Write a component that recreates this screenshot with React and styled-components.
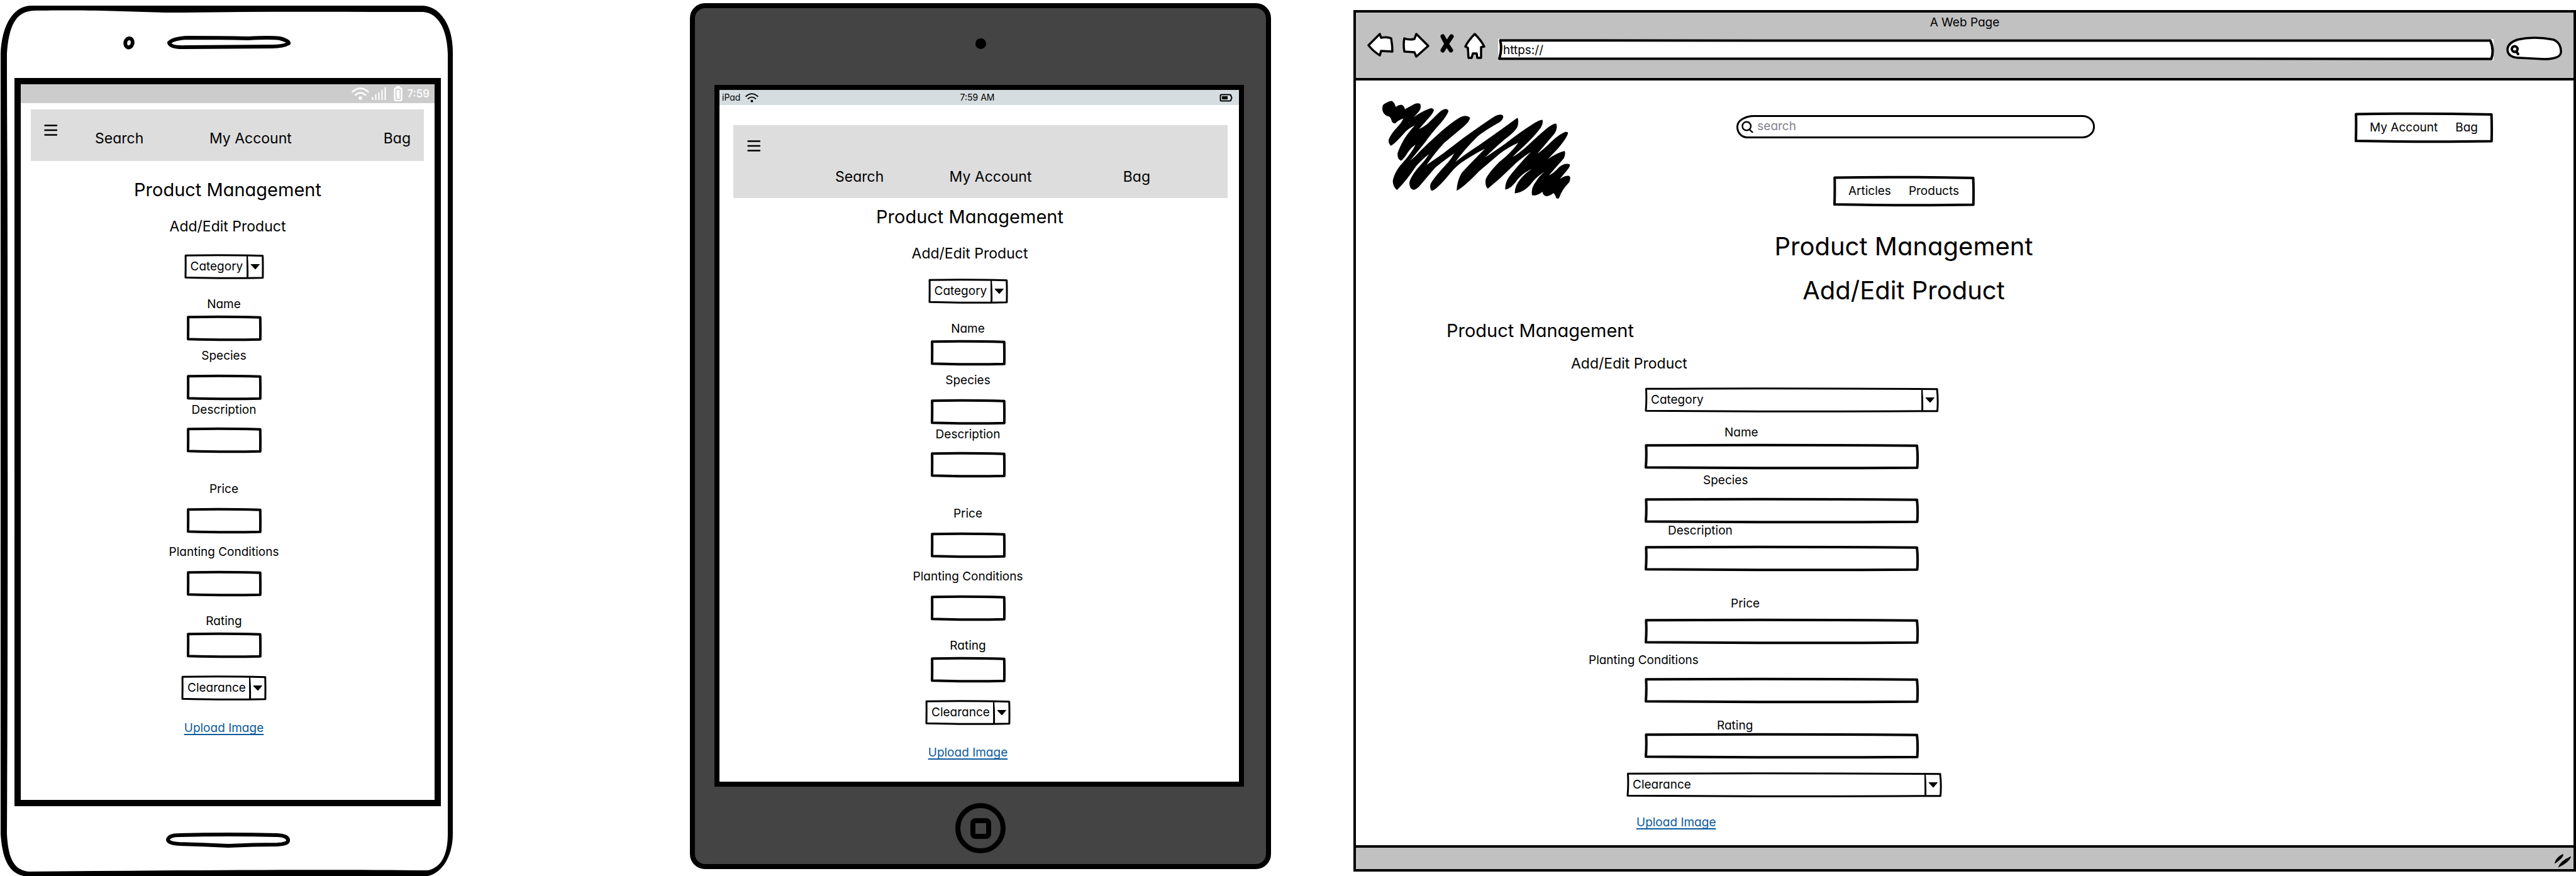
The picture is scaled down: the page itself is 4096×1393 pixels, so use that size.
import React from "react";
import styled, { createGlobalStyle, css } from "styled-components";

const ink = "#000";
const chrome = "#c1c1c1";

const GlobalStyle = createGlobalStyle`
  * { box-sizing: border-box; }
  body {
    margin: 0;
    background: #fff;
    color: ${ink};
    font-family: Inter, "Open Sans", sans-serif;
    font-feature-settings: "cv11";
    font-variation-settings: "opsz" 28;
  }
  h1, h2, h3 { margin: 0; font-weight: 400; white-space: nowrap; }
  a { color: inherit; text-decoration: none; }
  svg { display: block; }
`;

/* ---------- page ---------- */

const Board = styled.main`
  display: grid;
  grid-template-columns: 721fr 376fr 924fr 131fr 1944fr;
  align-items: start;
`;

const Cell = styled.div`
  grid-column: ${(p) => p.$col};
  padding-top: ${(p) => p.$top}px;
  min-width: 0;
`;

/* ---------- hand drawn parts ---------- */

const Outline = styled.svg`
  position: absolute;
  top: 2px;
  left: 2px;
  width: calc(100% - 4px);
  height: calc(100% - 4px);
  overflow: visible;
  pointer-events: none;
  fill: none;
  stroke: ${ink};
  stroke-linejoin: round;
  path { vector-effect: non-scaling-stroke; }
`;

function Sketch({ weight = 4 }) {
  return (
    <Outline viewBox="0 0 100 100" preserveAspectRatio="none" strokeWidth={weight} aria-hidden="true">
      <path d="M0.1 1 Q45 -3 99.8 2 Q100.2 50 99.9 99 Q55 103 0 98 Q0.3 50 0.1 1 Z" />
    </Outline>
  );
}

/* ---------- shared type ---------- */

const titleType = css`font-size: 29px; line-height: 32px;`;
const navType = css`font-size: 23px; line-height: 28px;`;
const bodyType = css`font-size: 19px; line-height: 20px;`;

const Display = styled.h1`
  font-size: 40px;
  line-height: 48px;
`;
const Title = styled.h2`${titleType}`;
const Subtitle = styled.h3`${navType}`;

/* ---------- form ---------- */

const Form = styled.form`
  display: flex;
  flex-direction: column;
  align-items: ${(p) => (p.$wide ? "flex-start" : "center")};
  padding-top: ${(p) => p.$top}px;
  padding-left: ${(p) => (p.$wide ? 370 : 0)}px;
  padding-right: ${(p) => p.$right || 0}px;
`;

const Label = styled.label`
  ${bodyType}
  white-space: nowrap;
  margin-top: ${(p) => p.$above}px;
  margin-left: ${(p) => p.$indent || 0}px;
`;

const InputBox = styled.div`
  position: relative;
  width: ${(p) => p.$width}px;
  height: 40px;
  margin-top: ${(p) => p.$gap}px;
  margin-left: ${(p) => p.$indent || 0}px;
`;

const TextInput = styled.input`
  width: 100%;
  height: 100%;
  padding: 0 8px;
  border: 0;
  outline: 0;
  background: transparent;
  font: inherit;
  font-size: 19px;
`;

const SelectBox = styled.div`
  position: relative;
  width: ${(p) => p.$width}px;
  height: 40px;
  margin-top: ${(p) => p.$gap}px;
  margin-left: ${(p) => p.$indent || 0}px;
`;

const Select = styled.select`
  width: 100%;
  height: 100%;
  padding: 0 28px 2px 10px;
  border: 0;
  outline: 0;
  appearance: none;
  background: transparent;
  color: ${ink};
  font: inherit;
  font-size: 19px;
`;

const Arrow = styled.svg`
  position: absolute;
  top: 0;
  right: 0;
  pointer-events: none;
`;

const UploadLink = styled.a`
  ${bodyType}
  margin-top: ${(p) => p.$above}px;
  margin-left: ${(p) => p.$indent || 0}px;
  color: #0b5a9d;
  text-decoration: underline;
  text-decoration-thickness: 2px;
  text-decoration-skip-ink: none;
  text-underline-offset: 3px;
`;

function DropDown({ name, width, gap, indent }) {
  return (
    <SelectBox $width={width} $gap={gap} $indent={indent}>
      <Select aria-label={name} defaultValue={name}>
        <option>{name}</option>
      </Select>
      <Arrow width="28" height="40" viewBox="0 0 28 40" aria-hidden="true">
        <path d="M0.5 2 Q2 20 1.5 38" fill="none" stroke="#000" strokeWidth="3" />
        <path d="M7 16.5 H20.5 L14 24 Z" fill="#000" stroke="#000" />
      </Arrow>
      <Sketch weight={3} />
    </SelectBox>
  );
}

const compact = {
  category: { width: 127 },
  fieldWidth: 119,
  fields: [
    { name: "Name", above: 30, gap: 8 },
    { name: "Species", above: 14, gap: 20 },
    { name: "Description", above: 6, gap: 18 },
    { name: "Price", above: 48, gap: 20 },
    { name: "Planting Conditions", above: 20, gap: 20 },
    { name: "Rating", above: 30, gap: 8 },
  ],
  clearance: { width: 136, gap: 28 },
  upload: { above: 34 },
};

const wide = {
  category: { width: 468, indent: 89 },
  fieldWidth: 436,
  fieldIndent: 89,
  fields: [
    { name: "Name", above: 22, gap: 8, indent: 216 },
    { name: "Species", above: 8, gap: 18, indent: 182 },
    { name: "Description", above: 2, gap: 14, indent: 126 },
    { name: "Price", above: 42, gap: 14, indent: 226 },
    { name: "Planting Conditions", above: 16, gap: 18, indent: 0 },
    { name: "Rating", above: 26, gap: 2, indent: 204 },
  ],
  clearance: { width: 502, gap: 22, indent: 60 },
  upload: { above: 30, indent: 76 },
};

function ProductForm({ id, plan, top, right }) {
  return (
    <Form $wide={plan === wide} $top={top} $right={right}>
      <DropDown name="Category" gap={0} {...plan.category} />
      {plan.fields.map((f) => {
        const fieldId = `${id}-${f.name.toLowerCase().replace(" ", "-")}`;
        return (
          <React.Fragment key={f.name}>
            <Label htmlFor={fieldId} $above={f.above} $indent={f.indent}>{f.name}</Label>
            <InputBox $width={plan.fieldWidth} $gap={f.gap} $indent={plan.fieldIndent}>
              <TextInput id={fieldId} type="text" />
              <Sketch />
            </InputBox>
          </React.Fragment>
        );
      })}
      <DropDown name="Clearance" {...plan.clearance} />
      <UploadLink href="#upload" $above={plan.upload.above} $indent={plan.upload.indent}>Upload Image</UploadLink>
    </Form>
  );
}

/* ---------- small-screen navigation ---------- */

const MenuBar = styled.nav`
  display: grid;
  grid-template-columns: ${(p) => (p.$tablet ? "140px" : "81px")} 182fr 277fr 43fr;
  align-items: start;
  margin: ${(p) => (p.$tablet ? "32px 18px 0 22px" : "10px 17px 0 16px")};
  padding: ${(p) => (p.$tablet ? "24px 123px 20px 22px" : "24px 21px 22px 21px")};
  background: #ddd;
`;

const MenuButton = styled.button`
  justify-self: start;
  padding: 0;
  border: 0;
  background: none;
`;

const MenuLink = styled.a`
  ${navType}
  padding-top: ${(p) => (p.$tablet ? 44 : 8)}px;
  white-space: nowrap;
`;

function Menu({ tablet }) {
  return (
    <MenuBar $tablet={tablet}>
      <MenuButton type="button" aria-label="Menu">
        <svg width="22" height="18" viewBox="0 0 22 18">
          <path d="M1.5 1.5 H20 M1.5 9 H20 M1.5 16.5 H20" stroke="#000" strokeWidth="2.4" strokeLinecap="round" />
        </svg>
      </MenuButton>
      {["Search", "My Account", "Bag"].map((t) => (
        <MenuLink key={t} href="#menu" $tablet={tablet}>{t}</MenuLink>
      ))}
    </MenuBar>
  );
}

const Stack = styled.div`
  display: flex;
  flex-direction: column;
  align-items: center;
  gap: 28px;
  padding: ${(p) => p.$top}px ${(p) => p.$right || 0}px 0 0;
`;

function Wifi({ color, width, height }) {
  return (
    <svg width={width} height={height} viewBox="0 0 28 20" fill="none" stroke={color} strokeWidth="2.5" strokeLinecap="round" aria-hidden="true">
      <path d="M1.5 7 Q14 -4 26.5 7" />
      <path d="M6 12 Q14 5 22 12" />
      <circle cx="14" cy="17" r="1.5" fill={color} />
    </svg>
  );
}

/* ---------- phone ---------- */

const PhoneBody = styled.section`
  position: relative;
`;

const PhoneShell = styled.svg`
  position: absolute;
  inset: 0;
  width: 100%;
  height: 100%;
  pointer-events: none;
`;

const PhoneEdge = styled.div`
  display: flex;
  height: ${(p) => p.$height}px;
  padding: ${(p) => p.$pad};
  gap: 50px;
`;

const PhoneScreen = styled.div`
  margin: 0 20px 0 23px;
  padding-bottom: 104px;
  border: 10px solid ${ink};
`;

const PhoneStatus = styled.div`
  display: flex;
  align-items: center;
  justify-content: flex-end;
  height: 30px;
  padding-right: 8px;
  background: #ccc;
  color: #fff;
  font-size: 17px;
  font-weight: 500;
  line-height: 20px;
`;

const StatusIcons = styled.span`
  display: flex;
  align-items: center;
  gap: 4px;
  margin-right: 6px;
`;

function Phone() {
  return (
    <PhoneBody>
      <PhoneShell viewBox="0 0 721 1384" preserveAspectRatio="none" aria-hidden="true">
        <path
          fillRule="evenodd"
          d="M49 0 H672 C700 1 721 32 720 76 V1316 C720 1352 702 1383 673 1384 H49 C17 1384 4 1362 1 1316 V76 C3 32 20 1 49 0 Z
             M52 8 C180 6 200 11 291 11 C420 9 540 10 673 10 C697 12 711 38 712 76 V1316 C712 1352 700 1370 680 1374 C500 1372 260 1374 46 1376 C24 1374 13 1358 11 1316 C13 900 12 600 12 400 C12 280 11 180 11 76 C14 34 24 10 52 8 Z"
        />
      </PhoneShell>
      <PhoneEdge $height={115} $pad="48px 0 0 195px">
        <svg width="20" height="22" viewBox="0 0 20 22" aria-hidden="true">
          <path d="M10 4 C18 3 18 18 9 18.5 C2 17 3 5 10 4 Z" fill="none" stroke="#000" strokeWidth="6" />
        </svg>
        <svg width="198" height="22" viewBox="0 0 198 22" aria-hidden="true">
          <path d="M34 3 Q85 3 130 4 Q165 2 180 4 Q195 8 194 12 Q185 17 168 17 L30 18 Q6 19 4 11 Q10 4 34 3 Z" fill="none" stroke="#000" strokeWidth="6" />
        </svg>
      </PhoneEdge>
      <PhoneScreen>
        <PhoneStatus>
          <StatusIcons>
            <Wifi color="#fff" width={28} height={20} />
            <svg width="24" height="20" viewBox="0 0 24 20" stroke="#fff" strokeWidth="2" aria-hidden="true">
              <path d="M1.5 20 V15 M6.5 20 V11 M11.5 20 V8 M16.5 20 V4 M21.5 20 V0" />
            </svg>
            <svg width="22" height="24" viewBox="0 0 22 24" aria-hidden="true">
              <rect x="8.5" y="3" width="11" height="20" rx="2.5" fill="none" stroke="#fff" strokeWidth="2.5" />
              <rect x="11" y="0" width="6" height="3" fill="#fff" />
              <rect x="11.5" y="6" width="5" height="14" fill="#fff" />
            </svg>
          </StatusIcons>
          7:59
        </PhoneStatus>
        <Menu />
        <Stack $top={30}>
          <Title>Product Management</Title>
          <Subtitle>Add/Edit Product</Subtitle>
        </Stack>
        <ProductForm id="phone" plan={compact} top={30} right={12} />
      </PhoneScreen>
      <PhoneEdge $height={112} $pad="42px 0 0 263px">
        <svg width="199" height="24" viewBox="0 0 199 24" aria-hidden="true">
          <path d="M22 4 Q100 2 178 4 Q196 5 195 13 Q195 18 178 19 Q140 19 100 21 Q60 19 22 18 Q4 17 4 11 Q6 4 22 4 Z" fill="none" stroke="#000" strokeWidth="6" />
        </svg>
      </PhoneEdge>
    </PhoneBody>
  );
}

/* ---------- tablet ---------- */

const TabletBody = styled.section`
  display: flex;
  flex-direction: column;
  border: 8px solid ${ink};
  border-radius: 24px;
  background: #444;
`;

const CameraEdge = styled.div`
  display: flex;
  justify-content: center;
  height: 122px;
  padding-top: 48px;
`;

const Camera = styled.span`
  width: 17px;
  height: 17px;
  border-radius: 50%;
  background: ${ink};
`;

const TabletScreen = styled.div`
  margin: 0 35px 0 31px;
  padding-bottom: 36px;
  border: 8px solid ${ink};
  background: #fff;
`;

const TabletStatus = styled.div`
  display: grid;
  grid-template-columns: 1fr auto 1fr;
  align-items: center;
  height: 24px;
  padding: 0 10px 0 4px;
  background: #d6dde0;
  font-size: 14px;
  line-height: 20px;
`;

const Carrier = styled.span`
  display: flex;
  align-items: center;
  gap: 8px;
`;

const BatteryIcon = styled.svg`
  justify-self: end;
`;

const HomeButton = styled.button`
  display: flex;
  align-items: center;
  justify-content: center;
  align-self: center;
  width: 80px;
  height: 80px;
  margin: 26px 0 17px;
  padding: 0;
  border: 8px solid ${ink};
  border-radius: 50%;
  background: none;
`;

const HomeMark = styled.span`
  width: 33px;
  height: 33px;
  border: 8px solid ${ink};
  border-radius: 8px;
`;

function Tablet() {
  return (
    <TabletBody>
      <CameraEdge><Camera /></CameraEdge>
      <TabletScreen>
        <TabletStatus>
          <Carrier>iPad <Wifi color="#000" width={21} height={15} /></Carrier>
          <span>7:59 AM</span>
          <BatteryIcon width="21" height="13" viewBox="0 0 21 13" aria-hidden="true">
            <path d="M3 1.5 H16 Q18.5 1.5 18.5 4 Q20.5 6.5 18.5 9 Q18.5 11.5 16 11.5 H3 Q1.5 11.5 1.5 10 V3 Q1.5 1.5 3 1.5 Z" fill="none" stroke="#000" strokeWidth="2" />
            <rect x="4" y="4" width="9" height="5" fill="#000" />
          </BatteryIcon>
        </TabletStatus>
        <Menu tablet />
        <Stack $top={14} $right={30}>
          <Title>Product Management</Title>
          <Subtitle>Add/Edit Product</Subtitle>
        </Stack>
        <ProductForm id="tablet" plan={compact} top={26} right={36} />
      </TabletScreen>
      <HomeButton type="button" aria-label="Home"><HomeMark /></HomeButton>
    </TabletBody>
  );
}

/* ---------- browser ---------- */

const Window = styled.section`
  border: 4px solid ${ink};
`;

const WindowHeader = styled.header`
  padding: 4px 18px 28px 18px;
  border-bottom: 4px solid ${ink};
  background: ${chrome};
`;

const WindowTitle = styled.div`
  font-size: 19px;
  line-height: 24px;
  text-align: center;
`;

const Toolbar = styled.div`
  display: flex;
  align-items: flex-end;
  gap: 20px;
  margin-top: 4px;
`;

const ToolGroup = styled.div`
  display: flex;
  align-items: flex-start;
  align-self: flex-start;
  gap: 14px;
  height: 44px;
`;

const ToolButton = styled.button`
  padding: 0;
  border: 0;
  background: none;
`;

const Address = styled.div`
  position: relative;
  flex: 1;
  height: 34px;
  background: #fff;
`;

const Pill = styled.div`
  position: relative;
  width: 89px;
  height: 38px;
`;

const PillArt = styled.svg`
  position: absolute;
  inset: 0;
`;

const PillInput = styled(TextInput)`
  position: relative;
  padding: 0 10px 0 28px;
`;

const Content = styled.div`
  padding-bottom: 26px;
`;

const SiteHeader = styled.div`
  display: grid;
  grid-template-columns: 303px 224px 608px 1fr 220px;
  align-items: start;
  padding: 0 128px 0 40px;
`;

const Logo = styled.svg`
  margin-top: 31px;
`;

const Middle = styled.div`
  grid-column: 3;
  display: flex;
  flex-direction: column;
  align-items: center;
  padding-top: 55px;
`;

const SearchBox = styled.div`
  display: flex;
  align-items: center;
  align-self: flex-end;
  width: 570px;
  height: 37px;
  padding-left: 5px;
  border: 3px solid ${ink};
  border-radius: 28px 20px 20px 17px / 18px;
`;

const SearchInput = styled(TextInput)`
  padding: 0 0 2px 6px;
  &::placeholder { color: #85838d; opacity: 1; }
`;

const LinkBox = styled.nav`
  position: relative;
  display: flex;
  align-items: center;
  justify-content: center;
  gap: 28px;
  height: 48px;
  width: ${(p) => p.$width}px;
  margin-top: ${(p) => p.$top}px;
  ${(p) => p.$last && css`grid-column: 5;`}
  ${bodyType}
`;

const Headings = styled.div`
  display: flex;
  flex-direction: column;
  align-items: center;
  gap: 22px;
  padding-top: 40px;
`;

const SideHeadings = styled.div`
  display: flex;
  flex-direction: column;
  gap: 22px;
  padding: 24px 0 0 144px;
`;

const Indented = styled.div`
  padding-left: 198px;
`;

const WindowFooter = styled.footer`
  display: flex;
  justify-content: flex-end;
  height: 38px;
  padding: 10px 4px 0;
  border-top: 4px solid ${ink};
  background: ${chrome};
`;

function Browser() {
  return (
    <Window>
      <WindowHeader>
        <WindowTitle>A Web Page</WindowTitle>
        <Toolbar>
          <ToolGroup>
            <ToolButton type="button" aria-label="Back">
              <svg width="42" height="38" viewBox="0 0 42 38" fill="#fff" stroke="#000" strokeWidth="3.5" strokeLinejoin="round">
                <path d="M2 20 L20 2 L22 8 Q32 6 38 9 Q40 20 40 30 L22 29 L20 36 Q10 30 2 20 Z" />
              </svg>
            </ToolButton>
            <ToolButton type="button" aria-label="Forward">
              <svg width="43" height="40" viewBox="0 0 43 40" fill="#fff" stroke="#000" strokeWidth="3.5" strokeLinejoin="round">
                <path d="M3 9 Q10 12 19 10 L22 2 L41 21 L22 38 L19 31 L3 30 Q1 18 3 9 Z" />
              </svg>
            </ToolButton>
            <ToolButton type="button" aria-label="Stop">
              <svg width="27" height="34" viewBox="0 0 27 34" stroke="#000" strokeWidth="7" strokeLinecap="round" fill="none">
                <path d="M7 6 Q12 17 20 28 M21 6 Q14 16 7 28" />
              </svg>
            </ToolButton>
            <ToolButton type="button" aria-label="Home">
              <svg width="34" height="42" viewBox="0 0 34 42" fill="#fff" stroke="#000" strokeWidth="3.5" strokeLinejoin="round">
                <path d="M17 2 Q27 12 32 22 L27 23 L27 40 L21 40 L20 33 L14 33 L12 40 L7 40 L6 24 L2 22 Q7 12 17 2 Z" />
              </svg>
            </ToolButton>
          </ToolGroup>
          <Address>
            <TextInput type="text" aria-label="Address" defaultValue="https://" />
            <Sketch />
          </Address>
          <Pill>
            <PillArt width="89" height="38" viewBox="0 0 89 38" aria-hidden="true">
              <path d="M18 5 Q44 -1 75 5 Q88 10 87 26 Q85 36 60 36 L22 34 Q2 34 2 20 Q3 10 18 5 Z" fill="#fff" stroke="#000" strokeWidth="3.5" />
              <circle cx="13.5" cy="20" r="4.5" fill="none" stroke="#000" strokeWidth="4" />
              <path d="M16 24 L19 28" stroke="#000" strokeWidth="4" strokeLinecap="round" />
            </PillArt>
            <PillInput type="text" aria-label="Web search" />
          </Pill>
        </Toolbar>
      </WindowHeader>
      <Content>
        <SiteHeader>
          <Logo width="303" height="159" viewBox="80 60 1205 632" role="img" aria-label="Logo">
            <path d="M92 92 Q120 68 148 66 Q166 75 172 104 Q190 90 208 90 Q228 96 230 118 L290 86 Q315 76 328 86 Q336 110 322 128 Q300 155 285 170 Q340 130 395 112 Q410 112 414 124 Q408 145 380 175 L320 244 Q350 230 372 212 Q410 175 440 145 Q465 120 488 117 Q506 119 506 132 Q495 160 455 208 Q400 270 360 325 Q300 400 265 442 Q300 415 320 390 Q400 310 480 242 Q560 175 595 163 Q625 155 643 172 Q640 195 600 230 L480 330 Q420 395 368 470 Q420 435 470 400 L600 300 Q740 200 800 162 Q835 145 850 158 Q860 175 830 200 Q740 250 690 290 Q600 380 550 452 Q600 410 700 345 Q850 240 942 172 Q952 185 944 225 Q930 260 860 310 Q790 370 737 424 Q780 395 860 340 Q950 270 1030 218 Q1080 185 1100 185 Q1108 205 1090 235 Q1050 290 980 355 Q930 400 912 420 Q950 400 1010 345 Q1090 270 1140 230 Q1175 207 1187 209 Q1200 235 1175 275 L1068 400 Q1110 370 1160 320 Q1210 275 1245 262 Q1262 260 1262 270 Q1255 300 1200 365 L1135 434 Q1190 395 1240 382 Q1250 400 1235 430 Q1190 480 1142 536 Q1175 520 1205 485 Q1240 455 1273 466 Q1278 480 1255 505 L1210 560 Q1245 535 1270 540 Q1282 550 1270 580 Q1225 625 1205 680 Q1195 688 1187 678 Q1180 655 1170 648 Q1150 665 1125 668 Q1105 665 1100 640 Q1065 668 1035 662 Q1025 620 1060 575 Q1080 540 1115 512 Q1070 540 1040 575 Q990 645 925 650 Q925 600 965 555 Q1000 515 1035 495 Q985 515 945 560 Q905 620 866 627 Q860 590 890 545 Q940 480 1027 388 Q960 430 900 490 Q830 560 755 621 Q735 600 742 560 Q760 520 830 450 Q900 395 948 330 Q880 360 830 400 L700 510 Q610 605 558 634 Q560 570 590 520 Q660 445 737 368 Q690 390 620 435 Q560 470 520 520 Q430 630 400 634 Q385 620 393 590 Q420 545 480 480 Q520 440 542 398 Q480 440 420 490 Q360 560 320 608 Q295 632 280 627 Q255 615 260 575 Q275 530 330 470 Q360 440 383 402 Q340 435 300 480 Q240 570 180 630 Q150 600 155 565 Q165 520 200 475 Q270 400 298 342 Q270 360 250 390 Q220 440 205 444 Q180 430 185 395 Q195 360 230 300 Q265 250 293 222 Q260 235 235 260 Q160 345 142 349 Q125 335 128 310 Q145 270 180 235 Q205 210 222 177 Q190 185 170 208 Q155 208 148 195 Q142 170 130 164 Q105 160 92 135 Q84 115 92 92 Z" />
          </Logo>
          <Middle>
            <SearchBox>
              <svg width="20" height="20" viewBox="0 0 20 20" fill="none" stroke="#000" strokeWidth="2.5" strokeLinecap="round" aria-hidden="true">
                <circle cx="8.5" cy="8.5" r="7" />
                <path d="M13 14 L18 18.5" />
              </svg>
              <SearchInput type="search" aria-label="Search products" placeholder="search" />
            </SearchBox>
            <LinkBox $width={225} $top={60}>
              <a href="#articles">Articles</a>
              <a href="#products">Products</a>
              <Sketch />
            </LinkBox>
            <Headings>
              <Display>Product Management</Display>
              <Display as="h2">Add/Edit Product</Display>
            </Headings>
          </Middle>
          <LinkBox $width={220} $top={51} $last>
            <a href="#account">My Account</a>
            <a href="#bag">Bag</a>
            <Sketch />
          </LinkBox>
        </SiteHeader>
        <SideHeadings>
          <Title>Product Management</Title>
          <Indented><Subtitle>Add/Edit Product</Subtitle></Indented>
        </SideHeadings>
        <ProductForm id="web" plan={wide} top={24} />
      </Content>
      <WindowFooter>
        <svg width="26" height="22" viewBox="0 0 26 22" aria-hidden="true">
          <path d="M1 14 Q3 6 13 1 Q14 5 1 14 Z M7 20 Q10 12 25 5 Q23 12 7 20 Z" stroke="#000" strokeWidth="1.5" />
        </svg>
      </WindowFooter>
    </Window>
  );
}

export default function App() {
  return (
    <>
      <GlobalStyle />
      <Board>
        <Cell $col={1} $top={9}><Phone /></Cell>
        <Cell $col={3} $top={5}><Tablet /></Cell>
        <Cell $col={5} $top={16}><Browser /></Cell>
      </Board>
    </>
  );
}
